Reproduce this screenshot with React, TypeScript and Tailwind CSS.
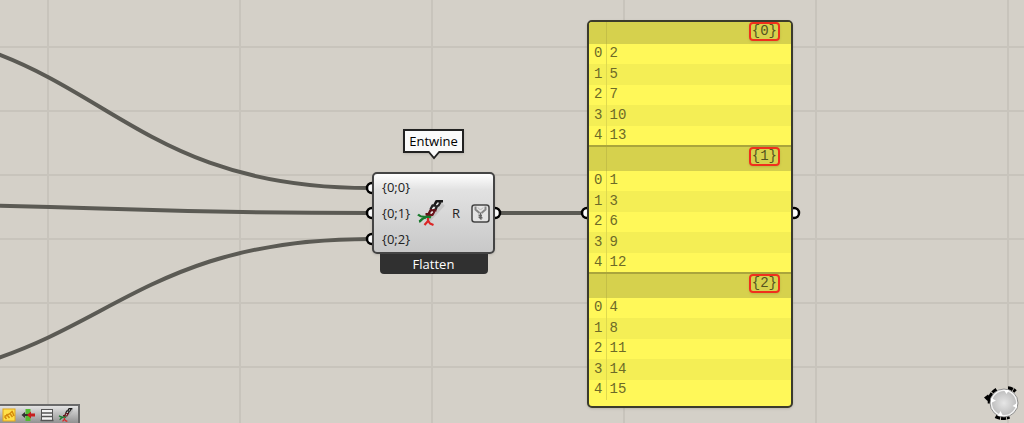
const UI_FONT = "font-['Open_Sans','Noto_Sans',sans-serif]";

const BRANCHES = [
  { path: "{0}", items: [2, 5, 7, 10, 13] },
  { path: "{1}", items: [1, 3, 6, 9, 12] },
  { path: "{2}", items: [4, 8, 11, 14, 15] },
];

const INPUTS = ["{0;0}", "{0;1}", "{0;2}"];

const WIRES = [
  "M-170 26C100 26 100 188 370 188",
  "M-170 204C100 204 100 213 370 213",
  "M-170 383C100 383 100 239 370 239",
  "M498 213H586",
];

const GRIPS = [
  { x: 372, y: 188 },
  { x: 372, y: 213 },
  { x: 372, y: 239 },
  { x: 495, y: 213 },
  { x: 587, y: 213 },
  { x: 794, y: 213 },
];

function EntwineIcon({ className }: { className?: string }) {
  return (
    <svg viewBox="0 0 30 30" className={className} fill="none" strokeLinejoin="round" aria-hidden="true">
      <path d="M27 6L11 23" stroke="#777" strokeWidth="5" opacity=".2" />
      <path d="M27 3.200h-6.500l-2 4" stroke="#181818" strokeWidth="2.600" />
      <path d="M24.500 4l-2 3.500h-6l-2 4" stroke="#222" strokeWidth="2.400" />
      <path d="M21 8l-1.500 3.500" stroke="#222" strokeWidth="2.400" />
      <path d="M20.500 12.300h-6l-2 4h-3" stroke="#5e1118" strokeWidth="2.400" />
      <path d="M18.500 13l-2 3.700h-4.500l-1 2" stroke="#6b131b" strokeWidth="2.400" />
      <path d="M22.300 5.200l-2 1.800M18.300 9.200l-2 1.800M16.800 13.700l-2 1.800" stroke="#e8e8e8" strokeWidth="1.300" />
      <path d="M2 16.500c2 2 4 2.700 7 2.500s4-.8 6 .5M3 23.500c2.500-.5 2.500-4 7-4" stroke="#187a2c" strokeWidth="2.400" />
      <path d="M12 20v3l-3.500 4M12 22.500l2 3 3.500 1.500" stroke="#dc2626" strokeWidth="2.200" />
    </svg>
  );
}

function SimplifyIcon() {
  return (
    <svg viewBox="0 0 19 19" className="size-[19px]" fill="none" aria-hidden="true">
      <rect x="1" y="1" width="17" height="17" rx="2.500" fill="#e4e4e4" stroke="#444" strokeWidth="1.500" />
      <path d="M4.500 2.500v3l4 3.500M14.500 2.500v3l-4 3.500" stroke="#858585" strokeWidth="2" />
      <path d="M7 3.500c1 2.500 4 2.500 5 0" stroke="#b5b5b5" strokeWidth="1" />
      <path d="M9.500 8.500v2.500M11 11.500H8.500l2 2h-2l2 2" stroke="#666" strokeWidth="1.400" />
    </svg>
  );
}

function Component() {
  return (
    <section className={`absolute left-[372px] top-[129px] flex w-[123px] flex-col items-center text-[13px] leading-5 text-[#222] ${UI_FONT}`}>
      <div className="relative mb-[19px] border-2 border-[#222] bg-[#fafafa] px-1 text-black shadow-sm">
        Entwine
        <svg viewBox="0 0 14 9" className="absolute left-1/2 top-full h-[9px] w-[14px] -translate-x-1/2" aria-hidden="true">
          <path d="M1 0l6 7 6-7" fill="#fafafa" stroke="#222" strokeWidth="1.800" />
        </svg>
      </div>
      <div className="flex w-full items-center rounded-[5px] border-2 border-[#444] bg-linear-to-b from-white via-[#e2e2e2] via-20% to-[#c8c8c8] pl-2 pr-[3px] shadow-sm">
        <ul>
          {INPUTS.map((name) => (
            <li key={name} className="h-[26px] leading-[26px]">
              {name}
            </li>
          ))}
        </ul>
        <EntwineIcon className="ml-[6px] size-[30px]" />
        <span className="ml-auto mr-[11px]">R</span>
        <button type="button" aria-label="Simplify">
          <SimplifyIcon />
        </button>
      </div>
      <div className="w-[108px] rounded-b-[4px] bg-[#303030] text-center text-white">Flatten</div>
    </section>
  );
}

function Panel() {
  return (
    <section className="absolute left-[587px] top-5 w-[206px] overflow-hidden rounded-[5px] border-2 border-[#3b3b2c] bg-[#fff859] pb-[6px] shadow-sm">
      <table className="w-full table-fixed border-collapse font-['Liberation_Mono',monospace] text-[14px] leading-4 text-[#6d6a28]">
        <colgroup>
          <col className="w-[17px]" />
          <col />
        </colgroup>
        {BRANCHES.map((branch, b) => (
          <tbody key={branch.path}>
            <tr className={b === 0 ? "h-[22px] bg-[#d6d14d]" : "h-[25px] border-t-2 border-[#aaa53c] bg-[#d6d14d]"}>
              <td className="border-r border-r-[#c4bf47] p-0" />
              <th scope="rowgroup" className="p-0 pr-[11px] text-right align-top font-normal">
                <span className="inline-block rounded border-2 border-[#f0301c] px-[1px] leading-[15px] text-[#55531f] shadow-sm">
                  {branch.path}
                </span>
              </th>
            </tr>
            {branch.items.map((value, i) => (
              <tr key={i} className={i % 2 ? "h-[21px] bg-[#f4ee55]" : "h-5"}>
                <td className="border-r border-r-[#ded94f] p-0 pb-[2px] pr-[3px] text-right">{i}</td>
                <td className="p-0 pb-[2px] pl-[3px]">{value}</td>
              </tr>
            ))}
          </tbody>
        ))}
      </table>
    </section>
  );
}

function Toolbar() {
  return (
    <nav className="absolute bottom-0 left-0 flex h-[19px] items-center gap-[3px] border-r-2 border-t-2 border-[#6b6b6b] bg-linear-to-b from-[#e4e4e4] to-[#929292] pl-[1px] pr-1">
      <button type="button" aria-label="Markov widget">
        <svg viewBox="0 0 16 16" className="size-4" aria-hidden="true">
          <rect x="2" y="2" width="12" height="12" fill="#ffe04a" stroke="#e0a51c" />
          <path d="M3.500 9.500l2 2.500M5.500 7l3 4M8.500 6l3 4M11 4l2 5M3.500 9.500l3-1.500 3-2 2-2" fill="none" stroke="#d58a0c" strokeWidth="1.500" />
        </svg>
      </button>
      <button type="button" aria-label="Align widget">
        <svg viewBox="0 0 16 16" className="size-4" aria-hidden="true">
          <rect x="5.500" y="2" width="5" height="12" fill="#55bb32" />
          <path d="M1.500 8l3.500-3v6z" fill="#333" />
          <path d="M4 8h5" stroke="#333" strokeWidth="2" />
          <path d="M7 8l4-3.500v2h4v3h-4v2z" fill="#c81e1e" />
        </svg>
      </button>
      <button type="button" aria-label="Profiler widget">
        <svg viewBox="0 0 16 16" className="size-4" aria-hidden="true">
          <rect x="2.500" y="2.500" width="11" height="11" fill="#f5f5f5" stroke="#555" />
          <path d="M2 6h12M2 9.500h12M1.500 13.500h13" stroke="#555" strokeWidth="1.300" />
        </svg>
      </button>
      <button type="button" aria-label="Entwine">
        <EntwineIcon className="size-4" />
      </button>
    </nav>
  );
}

function Compass() {
  return (
    <svg viewBox="0 0 40 36" className="absolute bottom-[2px] right-0 h-9 w-10" aria-hidden="true">
      <defs>
        <radialGradient id="dial">
          <stop offset="0" stopColor="#e6e6e6" />
          <stop offset="1" stopColor="#bdbdbd" />
        </radialGradient>
      </defs>
      <path d="M0 12.500l4-3 1.500 2 3 .5 1 3-3 1-2-1.500-1 1.500z" fill="#000" />
      <path
        d="M5.500 18.500c-.5-7 2-11 7-14M24 3c3 .2 5.500 1.500 7.500 3.500M11.500 31.500c4 2 9 2.500 14 .5"
        fill="none"
        stroke="#000"
        strokeWidth="3.500"
        strokeDasharray="5 .8"
      />
      <circle cx="20" cy="18" r="13" fill="url(#dial)" stroke="#f4f4f4" strokeWidth="2" />
      <circle cx="20" cy="18" r="14" fill="none" stroke="#777" strokeWidth=".8" />
      <path d="M20 5h5l-2.500 4zM7 13l5 2.500-5 2.500zM33 18v5l-4.500-2zM14 31l2.500-5 2.500 5z" fill="#fff" />
    </svg>
  );
}

export default function App() {
  return (
    <main className="relative min-h-screen overflow-hidden bg-[#d4d0c8] bg-[linear-gradient(to_right,#c8c4bc_2px,transparent_2px),linear-gradient(to_bottom,#c8c4bc_2px,transparent_2px)] bg-size-[192px_64px] bg-position-[47px_46px]">
      <svg className="absolute inset-0 size-full" fill="none" aria-hidden="true">
        <g stroke="#5b5a54" strokeWidth="4">
          {WIRES.map((d) => (
            <path key={d} d={d} />
          ))}
        </g>
        {GRIPS.map((g) => (
          <circle key={`${g.x}-${g.y}`} cx={g.x} cy={g.y} r="5" fill="#fff" stroke="#000" strokeWidth="2.500" />
        ))}
      </svg>
      <Component />
      <Panel />
      <Toolbar />
      <Compass />
    </main>
  );
}
